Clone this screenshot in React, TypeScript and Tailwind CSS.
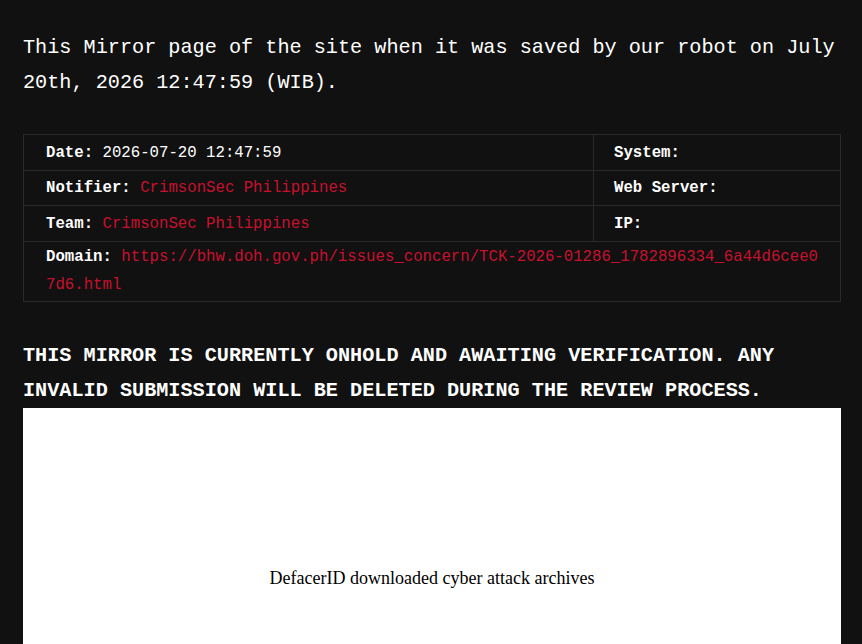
import React from 'react';

const mono = 'font-["Liberation_Mono","DejaVu_Sans_Mono",monospace]';

const link = 'https://bhw.doh.gov.ph/issues_concern/TCK-2026-01286_1782896334_6a44d6cee07d6.html';

function Cell({ label, value, red, className = '' }: { label: string; value?: string; red?: boolean; className?: string }) {
  return (
    <td className={`border border-[#2a2a2a] pt-[4.5px] pb-[4px] align-top leading-[26px] ${className}`}>
      <span className="font-bold text-white">{label}</span>
      {value && (
        <>
          {' '}
          <span className={red ? 'text-[#c8102e]' : 'text-white'}>{value}</span>
        </>
      )}
    </td>
  );
}

export default function App() {
  return (
    <div className={`min-h-screen bg-[#111111] pl-[23px] pr-[21px] pt-[30px] text-white ${mono}`}>
      <p className="text-[20.2px] leading-[35px] text-white">
        This Mirror page of the site when it was saved by our robot on July 20th, 2026 12:47:59 (WIB).
      </p>

      <table className="mt-[34px] w-full border-collapse border border-[#2a2a2a] text-[15.7px]">
        <tbody>
          <tr>
            <Cell label="Date:" value="2026-07-20 12:47:59" className="w-[570px] pl-[22px]" />
            <Cell label="System:" className="pl-[20px]" />
          </tr>
          <tr>
            <Cell label="Notifier:" value="CrimsonSec Philippines" red className="pl-[22px]" />
            <Cell label="Web Server:" className="pl-[20px]" />
          </tr>
          <tr>
            <Cell label="Team:" value="CrimsonSec Philippines" red className="pl-[22px]" />
            <Cell label="IP:" className="pl-[20px]" />
          </tr>
          <tr>
            <td colSpan={2} className="border border-[#2a2a2a] py-[1.5px] pl-[22px] pr-[20px] leading-[28px]">
              <span className="font-bold text-white">Domain:</span>{' '}
              <span className="break-all text-[#c8102e]">{link}</span>
            </td>
          </tr>
        </tbody>
      </table>

      <h2 className="mt-[36px] text-[20.2px] font-bold uppercase leading-[35px] text-white">
        This mirror is currently onhold and awaiting verification. Any invalid submission will be deleted during the review process.
      </h2>

      <div className="flex h-[342px] items-center justify-center bg-white">
        <span className="font-['Liberation_Serif',serif] text-[18px] text-black">
          DefacerID downloaded cyber attack archives
        </span>
      </div>
    </div>
  );
}
